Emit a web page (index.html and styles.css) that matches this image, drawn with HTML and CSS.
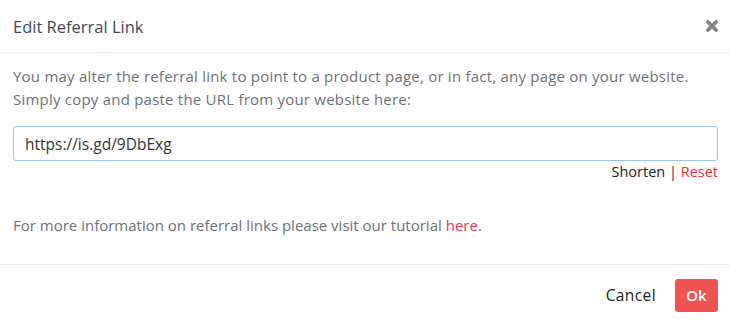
FILE: index.html
```html
<!DOCTYPE html>
<html lang="en">
<head>
  <meta charset="UTF-8">
  <meta name="viewport" content="width=device-width, initial-scale=1.0">
  <title>Edit Referral Link</title>
  <link rel="stylesheet" href="styles.css">
</head>
<body>

  <div class="modal">
    <!-- Шапка -->
    <div class="modal-header">
      <h4 class="modal-title">Edit Referral Link</h4>
      <button type="button" class="close" aria-label="Close">
        <svg width="12" height="12" viewBox="0 0 12 12">
          <path d="M2 2 L10 10 M10 2 L2 10" stroke="#858585" stroke-width="3.6" stroke-linecap="square"/>
        </svg>
      </button>
    </div>

    <!-- Тело -->
    <div class="modal-body">
      <p class="intro">You may alter the referral link to point to a product page, or in fact, any page on your website. Simply copy and paste the URL from your website here:</p>
      <input type="text" class="link-input" value="https://is.gd/9DbExg">
      <div class="link-actions">
        <a href="#" class="shorten">Shorten</a> | <a href="#" class="reset">Reset</a>
      </div>
      <p class="info">For more information on referral links please visit our tutorial <a href="#">here</a>.</p>
    </div>

    <!-- Подвал -->
    <div class="modal-footer">
      <button type="button" class="btn-cancel">Cancel</button>
      <button type="button" class="btn-ok">Ok</button>
    </div>
  </div>

</body>
</html>
```

FILE: styles.css
```css
* {
  margin: 0;
  padding: 0;
  box-sizing: border-box;
}

body, html {
  font-family: "Open Sans", Arial, sans-serif;
  background-color: #ffffff;
  color: #6c7278;
  overflow: hidden;
}

.modal {
  width: 730px;
  height: 325px;
  display: flex;
  flex-direction: column;
}

.modal-header {
  height: 53px;
  padding: 0 12px 0 13px;
  display: flex;
  align-items: center;
  justify-content: space-between;
  border-bottom: 1px solid #ececec;
}

.modal-title {
  font-size: 16.5px;
  font-weight: normal;
  color: #3f4a54;
}

.close {
  background: none;
  border: none;
  width: 12px;
  height: 12px;
  display: flex;
  cursor: pointer;
}

.modal-body {
  padding: 12px 12px 0 13px;
  height: 212px;
  border-bottom: 1px solid #ececec;
}

.intro {
  font-size: 15px;
  line-height: 23px;
  letter-spacing: 0.22px;
  margin-bottom: 15px;
}

.link-input {
  width: 100%;
  height: 35px;
  border: 1px solid #9cc3ea;
  border-radius: 3px;
  padding: 0 11px;
  font-family: inherit;
  font-size: 15.5px;
  color: #333;
  outline: none;
}

.link-actions {
  text-align: right;
  font-size: 14.5px;
  line-height: 22px;
  color: #333;
}

.link-actions a {
  text-decoration: none;
  color: #222;
}

.link-actions .reset {
  color: #e8343e;
}

.info {
  font-size: 15px;
  margin-top: 31px;
  line-height: 22px;
}

.info a {
  color: #e6375a;
  text-decoration: none;
}

.modal-footer {
  flex: 1;
  display: flex;
  justify-content: flex-end;
  align-items: center;
  gap: 8px;
  padding: 0 12px;
}

.btn-cancel {
  background: none;
  border: none;
  font-family: inherit;
  font-size: 15.5px;
  letter-spacing: 0.4px;
  color: #222;
  padding: 0 11px;
  cursor: pointer;
}

.btn-ok {
  background-color: #ef5352;
  color: #fff;
  border: none;
  border-radius: 3px;
  font-family: inherit;
  font-size: 15px;
  font-weight: 600;
  width: 43px;
  height: 33px;
  cursor: pointer;
}

.btn-ok:hover {
  background-color: #e04140;
}
```
